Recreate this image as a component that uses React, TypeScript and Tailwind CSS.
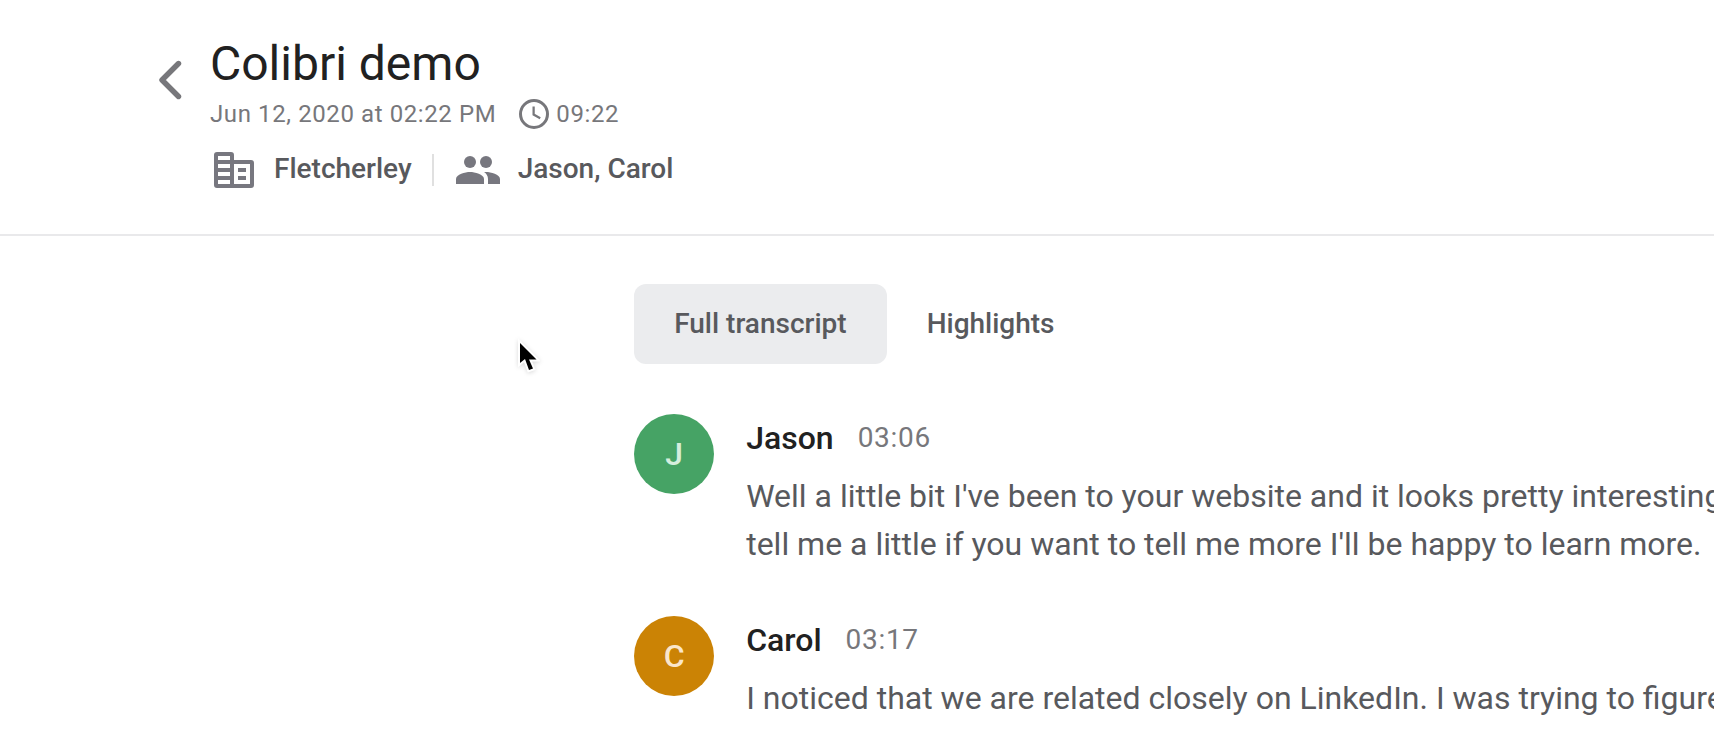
type TranscriptEntry = {
  name: string;
  time: string;
  avatarClass: string;
  initialClass: string;
  lines: string[];
};

const entries: TranscriptEntry[] = [
  {
    name: "Jason",
    time: "03:06",
    avatarClass: "bg-[#46a365]",
    initialClass: "text-[#d5eedd]",
    lines: [
      "Well a little bit I've been to your website and it looks pretty interesting",
      "tell me a little if you want to tell me more I'll be happy to learn more.",
    ],
  },
  {
    name: "Carol",
    time: "03:17",
    avatarClass: "bg-[#cb8305]",
    initialClass: "text-[#fae6cb]",
    lines: ["I noticed that we are related closely on LinkedIn. I was trying to figure"],
  },
];

function ChevronIcon() {
  return (
    <svg viewBox="0 0 24 40" className="h-10 w-6" fill="none" aria-hidden>
      <path
        d="M20.5 3.5 4 20l16.5 16.5"
        stroke="currentColor"
        strokeWidth="5.4"
        strokeLinecap="round"
        strokeLinejoin="round"
      />
    </svg>
  );
}

function ClockIcon() {
  return (
    <svg viewBox="0 0 24 24" className="size-9 shrink-0" fill="none" stroke="currentColor" aria-hidden>
      <circle cx="12" cy="12" r="9" strokeWidth="2" />
      <path d="M11.75 7v5.4l4.4 2.4" strokeWidth="1.5" />
    </svg>
  );
}

function CompanyIcon() {
  return (
    <svg viewBox="0 0 24 24" className="size-12 shrink-0" fill="currentColor" aria-hidden>
      <path
        fillRule="evenodd"
        d="M12 7V4.500A1.500 1.500 0 0 0 10.500 3h-7A1.500 1.500 0 0 0 2 4.500v15A1.500 1.500 0 0 0 3.500 21h17a1.500 1.500 0 0 0 1.500-1.500v-11A1.500 1.500 0 0 0 20.500 7H12zM10 19H4v-2h6v2zm0-4H4v-2h6v2zm0-4H4V9h6v2zm0-4H4V5h6v2zm10 12h-8V9h8v10zm-2-8h-4v2h4v-2zm0 4h-4v2h4v-2z"
      />
    </svg>
  );
}

function PeopleIcon() {
  return (
    <svg viewBox="0 0 24 24" className="size-12 shrink-0" fill="currentColor" aria-hidden>
      <circle cx="8" cy="8" r="3" />
      <circle cx="16" cy="8" r="3" />
      <path d="M8 13c-2.33 0-7 1.17-7 3.5V19h14v-2.5c0-2.33-4.67-3.5-7-3.5z" />
      <path d="M16 13c-.29 0-.62.02-.97.05 1.16.84 1.97 1.97 1.97 3.45V19h6v-2.5c0-2.33-4.67-3.5-7-3.5z" />
    </svg>
  );
}

function Pointer() {
  return (
    <svg
      viewBox="0 0 24 40"
      className="pointer-events-none absolute top-[336px] left-[516px] h-10 w-6 drop-shadow-sm"
      aria-hidden
    >
      <path
        d="M4 7v20l5-4 4 11 4-1.500-4-9h7.500z"
        fill="#000"
        stroke="#fff"
        strokeWidth="4"
        paintOrder="stroke"
      />
    </svg>
  );
}

function Header() {
  return (
    <header className="flex items-start gap-6 border-b-2 border-[#e9e9eb] pt-9 pr-10 pb-10 pl-[158px]">
      <button type="button" aria-label="Back" className="mt-6 w-7 shrink-0 text-[#77777b]">
        <ChevronIcon />
      </button>
      <div>
        <h1 className="text-[48px] leading-[56px] text-[#212121]">Colibri demo</h1>

        <div className="mt-1 flex items-center text-2xl leading-9 tracking-wide text-[#77777b]">
          <span>Jun 12, 2020 at 02:22 PM</span>
          <span className="ml-5 flex items-center gap-1">
            <ClockIcon />
            09:22
          </span>
        </div>

        <div className="mt-3.5 flex h-12 items-center text-[28px] font-medium text-[#58595d]">
          <span className="flex gap-4">
            <span className="text-[#77777f]">
              <CompanyIcon />
            </span>
            <span className="leading-[46px]">Fletcherley</span>
          </span>
          <span className="mx-5 h-8 w-0.5 bg-[#e0e0e0]" />
          <span className="flex gap-4">
            <span className="text-[#77777f]">
              <PeopleIcon />
            </span>
            <span className="leading-[46px]">Jason, Carol</span>
          </span>
        </div>
      </div>
    </header>
  );
}

function Tabs() {
  return (
    <div role="tablist" className="flex text-[28px] leading-10 font-medium text-[#58595d]">
      <button type="button" role="tab" aria-selected="true" className="rounded-xl bg-[#ebecee] px-10 py-5">
        Full transcript
      </button>
      <button type="button" role="tab" aria-selected="false" className="rounded-xl px-10 py-5">
        Highlights
      </button>
    </div>
  );
}

function Entry({ name, time, avatarClass, initialClass, lines }: TranscriptEntry) {
  return (
    <article className="flex gap-8">
      <div
        className={`flex size-20 shrink-0 items-center justify-center rounded-full text-[32px] font-medium ${avatarClass} ${initialClass}`}
      >
        {name[0]}
      </div>
      <div>
        <div className="flex items-center gap-6 leading-[48px]">
          <h2 className="text-[32px] font-medium text-[#212121]">{name}</h2>
          <time className="text-[28px] tracking-wide text-[#77777b]">{time}</time>
        </div>
        <p className="mt-2.5 text-[32px] leading-[48px] whitespace-nowrap text-[#58595d]">
          {lines.map((line) => (
            <span key={line} className="block">
              {line}
            </span>
          ))}
        </p>
      </div>
    </article>
  );
}

export default function App() {
  return (
    <div className="relative h-screen overflow-hidden bg-white font-['Roboto',sans-serif]">
      <Header />
      <main className="pt-12 pl-[37%]">
        <Tabs />
        <section className="mt-[50px] flex flex-col gap-12">
          {entries.map((entry) => (
            <Entry key={entry.name} {...entry} />
          ))}
        </section>
      </main>
      <Pointer />
    </div>
  );
}
